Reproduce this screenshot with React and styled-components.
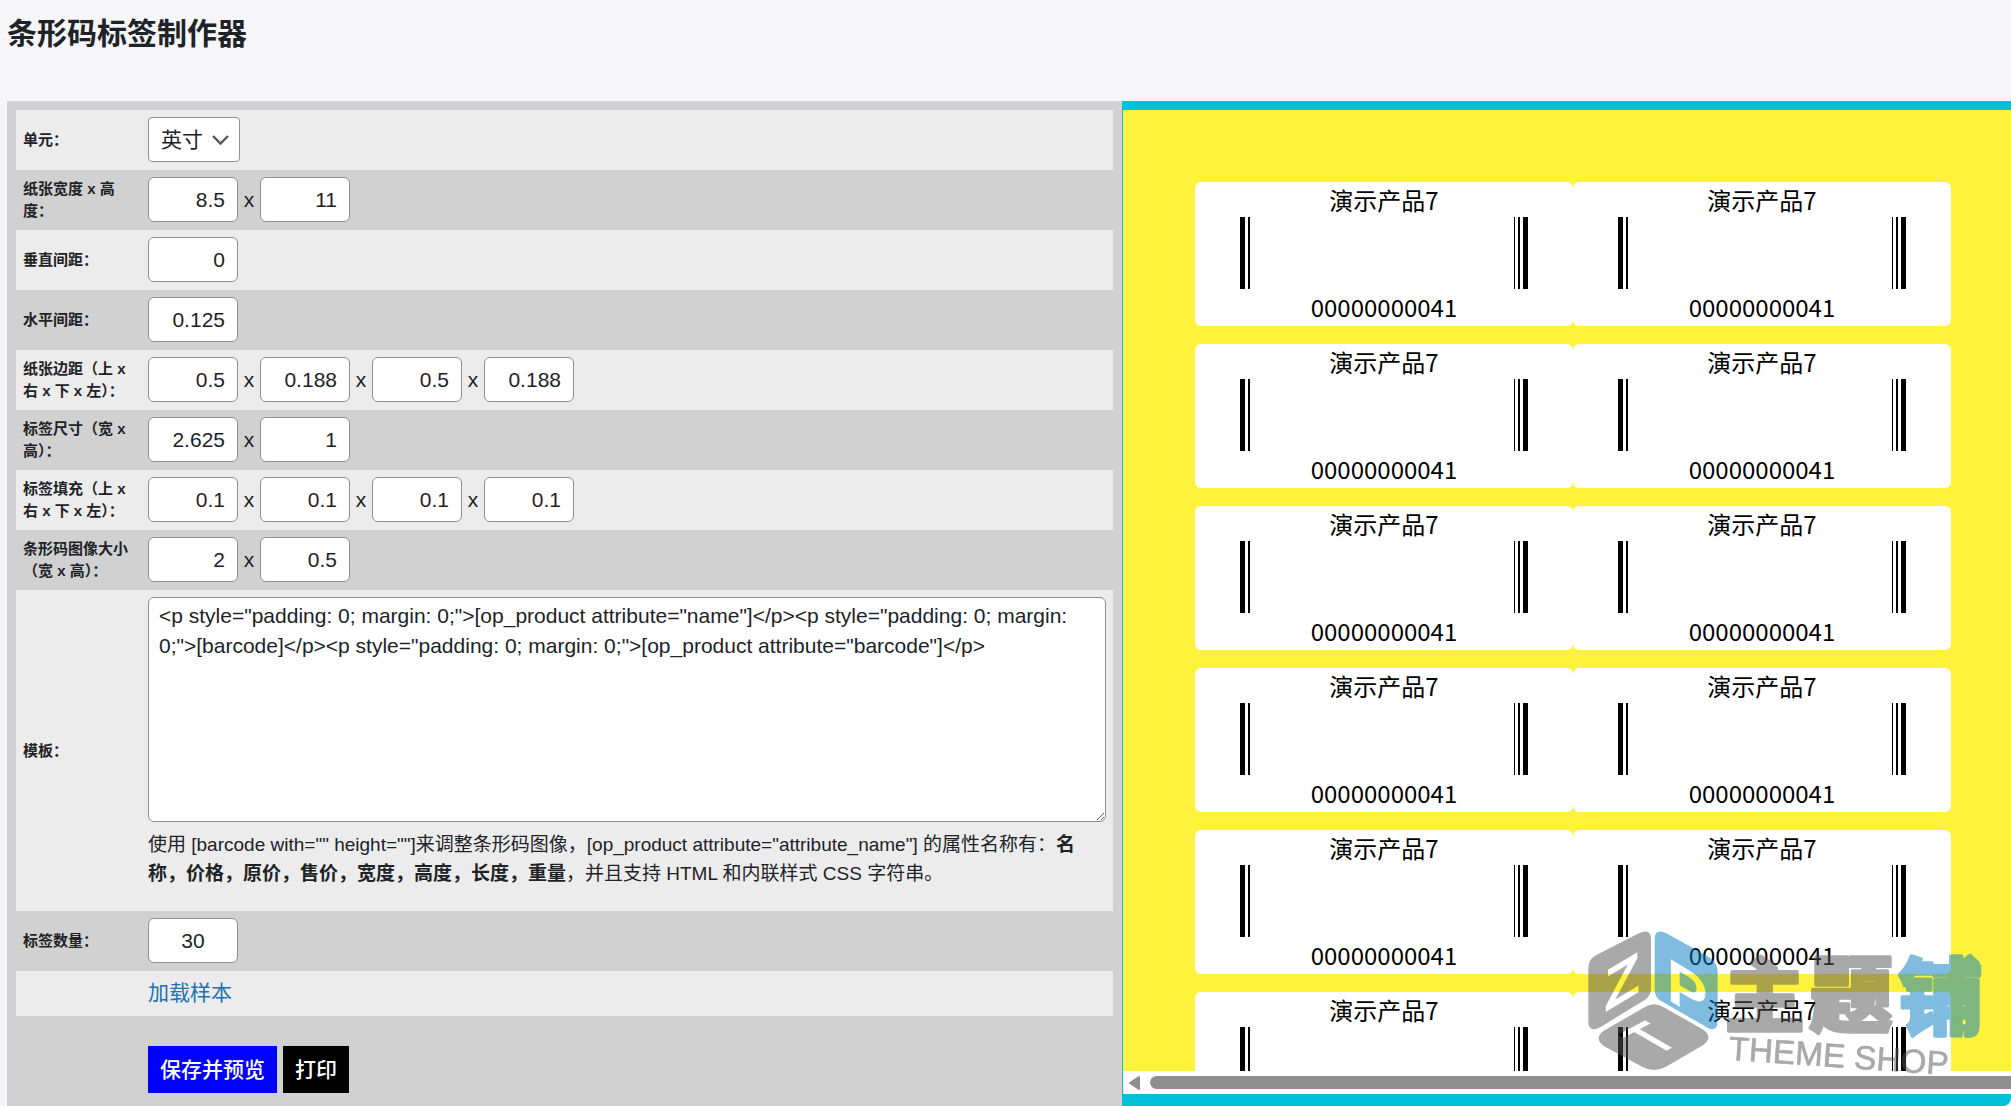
import React, { useState } from 'react';
import styled, { createGlobalStyle } from 'styled-components';

const GlobalStyle = createGlobalStyle`
  * {
    box-sizing: border-box;
  }

  body {
    margin: 0;
    background-color: #f6f6f8;
    color: #1d2327;
    font-family: "Liberation Sans", "Noto Sans CJK SC", sans-serif;
    font-size: 21px;
  }
`;

// Page layout
const Page = styled.main`
  display: flex;
  flex-direction: column;
  height: 100vh;
  padding-left: 7px;
  overflow: hidden;
`;

const PageTitle = styled.h1`
  flex: none;
  margin: 0;
  padding: 12px 0 45px;
  font-size: 30px;
  line-height: 44px;
`;

const Columns = styled.div`
  flex: 1;
  display: grid;
  grid-template-columns: minmax(0, 1115fr) minmax(0, 889fr);
  min-height: 0;
`;

// Settings form
const SettingsForm = styled.form`
  padding: 9px;
  background-color: #d1d1d1;
`;

const FormTable = styled.table`
  width: 100%;
  border-collapse: collapse;
`;

const FormRow = styled.tr`
  &:nth-child(odd) {
    background-color: #ececec;
  }
`;

const LabelCell = styled.th`
  width: 132px;
  padding: 0 14px 0 7px;
  font-size: 15px;
  font-weight: 700;
  line-height: 22px;
  text-align: left;
`;

const FieldCell = styled.td`
  padding: 7px 7px 8px 0;
`;

const FieldGroup = styled.div`
  display: flex;
  align-items: center;
`;

const Times = styled.span`
  width: 22px;
  text-align: center;
`;

const TextInput = styled.input`
  width: 90px;
  height: 45px;
  padding: 0 12px;
  border: 1px solid #8c8f94;
  border-radius: 6px;
  background-color: white;
  color: #1d2327;
  font: inherit;
  text-align: ${(props) => props.$align || 'right'};
`;

const SelectBox = styled.div`
  position: relative;
  width: 92px;
`;

const UnitSelect = styled.select`
  display: block;
  width: 100%;
  height: 45px;
  padding: 0 30px 0 12px;
  border: 1px solid #8c8f94;
  border-radius: 4px;
  background-color: white;
  color: #1d2327;
  font: inherit;
  appearance: none;
`;

const SelectArrow = styled.svg`
  position: absolute;
  top: 17px;
  right: 11px;
  pointer-events: none;
`;

const TemplateInput = styled.textarea`
  display: block;
  width: 100%;
  height: 225px;
  padding: 3px 10px;
  border: 1px solid #8c8f94;
  border-radius: 6px;
  background-color: white;
  color: #1d2327;
  font: inherit;
  line-height: 30px;
  resize: both;
`;

const HelpText = styled.p`
  margin: 8px 0 15px;
  font-size: 19px;
  line-height: 29px;
`;

const SampleLink = styled.a`
  display: block;
  color: #2271b1;
  line-height: 30px;
  text-decoration: none;
`;

const Actions = styled.div`
  display: flex;
  gap: 6px;
  padding: 30px 0 0 132px;
`;

const ActionButton = styled.button`
  height: 47px;
  padding: 0 12px 4px;
  border: none;
  background-color: ${(props) => (props.$primary ? '#0000ff' : '#000000')};
  color: white;
  font: inherit;
  font-weight: 500;
  cursor: pointer;
`;

// Label preview
const Preview = styled.section`
  position: relative;
  display: flex;
  flex-direction: column;
  min-height: 0;
  padding: 9px 0 12px 1px;
  border-bottom-right-radius: 8px;
  background-color: #00c1da;
`;

const SheetViewport = styled.div`
  flex: 1;
  min-height: 0;
  overflow: hidden;
  background-color: #fff23c;
`;

const Sheet = styled.div`
  display: grid;
  grid-template-columns: repeat(2, 378px);
  row-gap: 18px;
  padding: 72px;
`;

const ProductLabel = styled.div`
  display: flex;
  flex-direction: column;
  align-items: center;
  height: 144px;
  border-radius: 6px;
  background-color: white;
  color: black;
  font-family: "Noto Sans CJK SC", sans-serif;
  font-size: 24px;
`;

const LabelText = styled.p`
  margin: 0;
  line-height: 35px;
`;

const ScrollTrack = styled.div`
  display: flex;
  align-items: center;
  flex: none;
  gap: 10px;
  height: 23px;
  padding-left: 6px;
  background-color: white;
`;

const ScrollThumb = styled.div`
  flex: 1;
  height: 13px;
  border-radius: 7px 0 0 7px;
  background-color: #8f8f8f;
`;

const Watermark = styled.svg`
  position: absolute;
  right: 22px;
  bottom: 27px;
  opacity: 0.5;
  pointer-events: none;
`;

const template =
  '<p style="padding: 0; margin: 0;">[op_product attribute="name"]</p>' +
  '<p style="padding: 0; margin: 0;">[barcode]</p>' +
  '<p style="padding: 0; margin: 0;">[op_product attribute="barcode"]</p>';

const sizeFields = [
  { id: 'paper-size', label: '纸张宽度 x 高度：', values: ['8.5', '11'] },
  { id: 'vertical-gap', label: '垂直间距：', values: ['0'] },
  { id: 'horizontal-gap', label: '水平间距：', values: ['0.125'] },
  { id: 'paper-margin', label: '纸张边距（上 x 右 x 下 x 左）：', values: ['0.5', '0.188', '0.5', '0.188'] },
  { id: 'label-size', label: '标签尺寸（宽 x 高）：', values: ['2.625', '1'] },
  { id: 'label-padding', label: '标签填充（上 x 右 x 下 x 左）：', values: ['0.1', '0.1', '0.1', '0.1'] },
  { id: 'barcode-size', label: '条形码图像大小（宽 x 高）：', values: ['2', '0.5'] },
];

const products = Array.from({ length: 12 }, () => ({ name: '演示产品7', barcode: '00000000041' }));

// [x, width] of every bar
const bars = [[0, 5], [8, 2], [274, 1], [278, 2], [283, 5]];

const Barcode = () => (
  <svg width="288" height="72" shapeRendering="crispEdges">
    {bars.map(([x, width]) => (
      <rect key={x} x={x} y="0" width={width} height="72" />
    ))}
  </svg>
);

const SizeRow = ({ field }) => {
  const [values, setValues] = useState(field.values);

  const handleChange = (index, value) => {
    setValues(values.map((old, i) => (i === index ? value : old)));
  };

  return (
    <FormRow>
      <LabelCell scope="row">
        <label htmlFor={`${field.id}-0`}>{field.label}</label>
      </LabelCell>
      <FieldCell>
        <FieldGroup>
          {values.map((value, index) => (
            <React.Fragment key={index}>
              {index > 0 && <Times>x</Times>}
              <TextInput
                id={`${field.id}-${index}`}
                aria-label={index > 0 ? `${field.label}${index + 1}` : undefined}
                value={value}
                onChange={(e) => handleChange(index, e.target.value)}
              />
            </React.Fragment>
          ))}
        </FieldGroup>
      </FieldCell>
    </FormRow>
  );
};

const ThemeShopMark = () => (
  <Watermark width="409" height="154" viewBox="0 0 1227 462">
    <defs>
      <mask id="cube-letters">
        <rect width="450" height="462" fill="white" />
        <g fontFamily="Liberation Sans, sans-serif" fill="black">
          <text transform="translate(72 264) skewY(-31)" fontSize="178" fontWeight="700">Z</text>
          <text transform="translate(260 222) skewY(31)" fontSize="184" fontWeight="700">P</text>
          <text
            transform="translate(224 394) rotate(-28) skewX(32)"
            fontSize="155"
            stroke="black"
            strokeWidth="4"
          >
            T
          </text>
        </g>
      </mask>
    </defs>
    <g mask="url(#cube-letters)">
      <path
        fill="#555555"
        d="M25 130Q25 104 45 92L172 27Q213 6 213 42V190Q213 213 194 225L62 306Q25 326 25 288Z"
      />
      <path
        fill="#017bc1"
        d="M224 42Q224 8 262 26L385 95Q413 112 413 142V288Q413 322 384 309L242 227Q224 216 224 194Z"
      />
      <path
        fill="#555555"
        d="M195 246Q222 230 250 246L370 314Q400 336 370 360L258 425Q222 445 186 425L70 362Q42 340 70 318Z"
      />
    </g>
    <g fontFamily="Noto Sans CJK SC, sans-serif" fontWeight="900" strokeWidth="10" strokeLinejoin="round">
      <text x="434" y="300" fontSize="240" fill="#555555" stroke="#555555">主</text>
      <text x="688" y="300" fontSize="250" fill="#555555" stroke="#555555">题</text>
      <text x="955" y="310" fontSize="254" fill="#017bc1" stroke="#017bc1">铺</text>
    </g>
    <text
      transform="translate(444 404) rotate(4)"
      fontFamily="Liberation Sans, sans-serif"
      fontSize="100"
      fill="#555555"
      stroke="#555555"
      strokeWidth="2"
    >
      THEME SHOP
    </text>
  </Watermark>
);

const App = () => {
  const [content, setContent] = useState(template);
  const [count, setCount] = useState('30');

  return (
    <>
      <GlobalStyle />
      <Page>
        <PageTitle>条形码标签制作器</PageTitle>
        <Columns>
          <SettingsForm onSubmit={(e) => e.preventDefault()}>
            <FormTable>
              <tbody>
                <FormRow>
                  <LabelCell scope="row">
                    <label htmlFor="unit">单元：</label>
                  </LabelCell>
                  <FieldCell>
                    <SelectBox>
                      <UnitSelect id="unit" defaultValue="in">
                        <option value="in">英寸</option>
                      </UnitSelect>
                      <SelectArrow width="17" height="12" viewBox="0 0 17 12">
                        <path d="M1 2L8.500 9.500L16 2" fill="none" stroke="#50575e" strokeWidth="2.400" />
                      </SelectArrow>
                    </SelectBox>
                  </FieldCell>
                </FormRow>
                {sizeFields.map((field) => (
                  <SizeRow key={field.id} field={field} />
                ))}
                <FormRow>
                  <LabelCell scope="row">
                    <label htmlFor="template">模板：</label>
                  </LabelCell>
                  <FieldCell>
                    <TemplateInput
                      id="template"
                      spellCheck={false}
                      value={content}
                      onChange={(e) => setContent(e.target.value)}
                    />
                    <HelpText>
                      使用 [barcode with="" height=""]来调整条形码图像，[op_product attribute="attribute_name"] 的属性名称有：
                      <b>名称，价格，原价，售价，宽度，高度，长度，重量</b>，并且支持 HTML 和内联样式 CSS 字符串。
                    </HelpText>
                  </FieldCell>
                </FormRow>
                <FormRow>
                  <LabelCell scope="row">
                    <label htmlFor="count">标签数量：</label>
                  </LabelCell>
                  <FieldCell>
                    <FieldGroup>
                      <TextInput id="count" $align="center" value={count} onChange={(e) => setCount(e.target.value)} />
                    </FieldGroup>
                  </FieldCell>
                </FormRow>
                <FormRow>
                  <LabelCell as="td" />
                  <FieldCell>
                    <SampleLink href="#sample">加载样本</SampleLink>
                  </FieldCell>
                </FormRow>
              </tbody>
            </FormTable>
            <Actions>
              <ActionButton type="submit" $primary>保存并预览</ActionButton>
              <ActionButton type="button">打印</ActionButton>
            </Actions>
          </SettingsForm>
          <Preview>
            <SheetViewport>
              <Sheet>
                {products.map((product, index) => (
                  <ProductLabel key={index}>
                    <LabelText>{product.name}</LabelText>
                    <Barcode />
                    <LabelText>{product.barcode}</LabelText>
                  </ProductLabel>
                ))}
              </Sheet>
            </SheetViewport>
            <ScrollTrack>
              <svg width="11" height="14" viewBox="0 0 11 14">
                <path d="M10 1V13L1 7Z" fill="#8f8f8f" stroke="#8f8f8f" strokeWidth="2" strokeLinejoin="round" />
              </svg>
              <ScrollThumb />
            </ScrollTrack>
            <ThemeShopMark />
          </Preview>
        </Columns>
      </Page>
    </>
  );
};

export default App;
